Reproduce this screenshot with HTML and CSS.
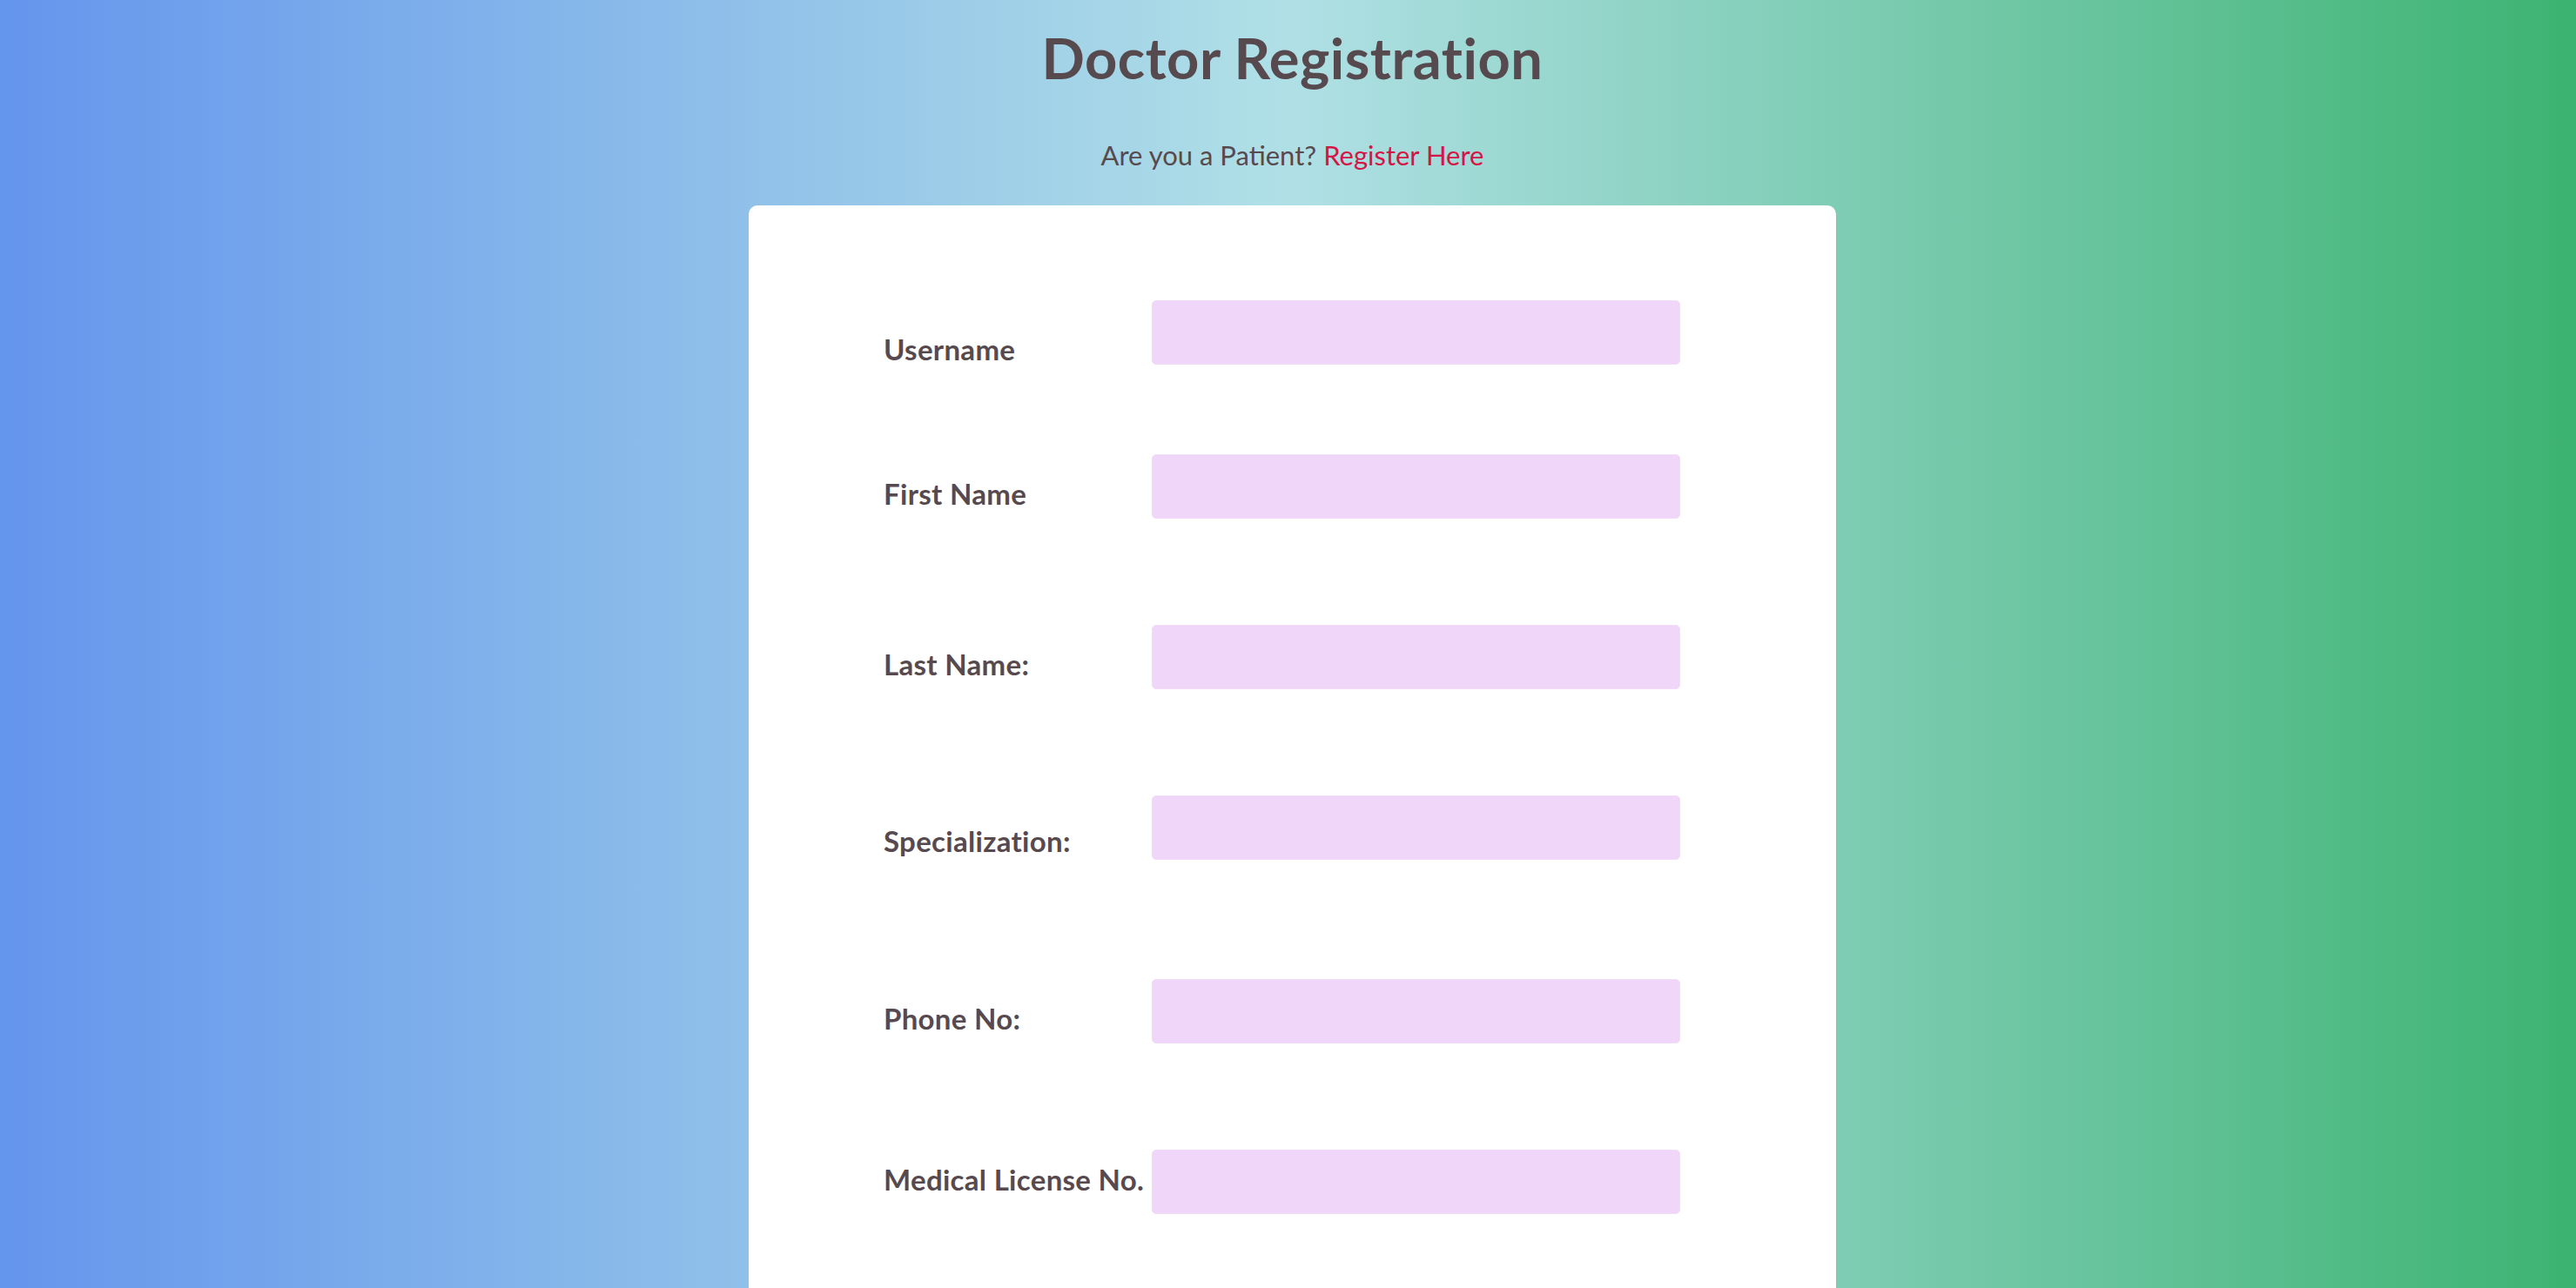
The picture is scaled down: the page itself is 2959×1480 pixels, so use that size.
FILE: index.html
```html
<!DOCTYPE html>
<html lang="en">
<head>
<meta charset="utf-8">
<title>Doctor Registration</title>
<link rel="stylesheet" href="styles.css">
</head>
<body>
  <h1 class="title">Doctor Registration</h1>
  <p class="subtitle">Are you a Patient? <a class="subtitle__link" href="#">Register Here</a></p>
  <main class="card">
    <form class="form">
      <div class="field field--first">
        <label class="field__label field__label--low" for="username">Username</label>
        <input class="field__input" id="username" type="text">
      </div>
      <div class="field field--near">
        <label class="field__label" for="first">First Name</label>
        <input class="field__input" id="first" type="text">
      </div>
      <div class="field">
        <label class="field__label" for="last">Last Name:</label>
        <input class="field__input" id="last" type="text">
      </div>
      <div class="field">
        <label class="field__label field__label--mid" for="spec">Specialization:</label>
        <input class="field__input" id="spec" type="text">
      </div>
      <div class="field field--far">
        <label class="field__label" for="phone">Phone No:</label>
        <input class="field__input" id="phone" type="text">
      </div>
      <div class="field">
        <label class="field__label field__label--high" for="license">Medical License No.</label>
        <input class="field__input" id="license" type="text">
      </div>
    </form>
  </main>
</body>
</html>
```
FILE: styles.css
```css
html {
  background: linear-gradient(to right, #6495ed, #b0e0e6, #3cb371);
  min-height: 100%;
}

body {
  margin: 0;
  padding: 0 0 0 10px;
  font-family: "Lato", "Noto Sans", sans-serif;
  color: #574a4f;
  min-height: 100vh;
  overflow: hidden;
}

.title {
  margin: 34px 0 0;
  font-size: 65px;
  line-height: 1;
  font-weight: 700;
  letter-spacing: 0.5px;
  text-align: center;
}

.subtitle {
  margin: 64px 0 0;
  font-size: 31px;
  line-height: 1;
  text-align: center;
}

.subtitle__link {
  color: #d31645;
  text-decoration: none;
}

.card {
  width: 1249px;
  margin: 42px auto 0;
  box-sizing: border-box;
  background: #ffffff;
  border-radius: 10px;
  padding: 109px 0 200px 155px;
}

.form {
  display: flex;
  flex-direction: column;
}

.field {
  display: flex;
  align-items: flex-end;
  margin-top: 122px;
}

.field--first {
  margin-top: 0;
}

.field--near {
  margin-top: 103px;
}

.field--far {
  margin-top: 137px;
}

.field__label {
  width: 308px;
  flex: none;
  font-size: 33px;
  line-height: 1;
  font-weight: 700;
  letter-spacing: 0.3px;
  padding-bottom: 12px;
}

.field__label--low {
  padding-bottom: 1px;
}

.field__label--mid {
  padding-bottom: 5px;
}

.field__label--high {
  padding-bottom: 23px;
}

.field__input {
  width: 607px;
  height: 74px;
  box-sizing: border-box;
  margin: 0;
  background: #f0d6f8;
  border: 1px solid #f2dcf8;
  border-radius: 5px;
  outline: none;
}
```
